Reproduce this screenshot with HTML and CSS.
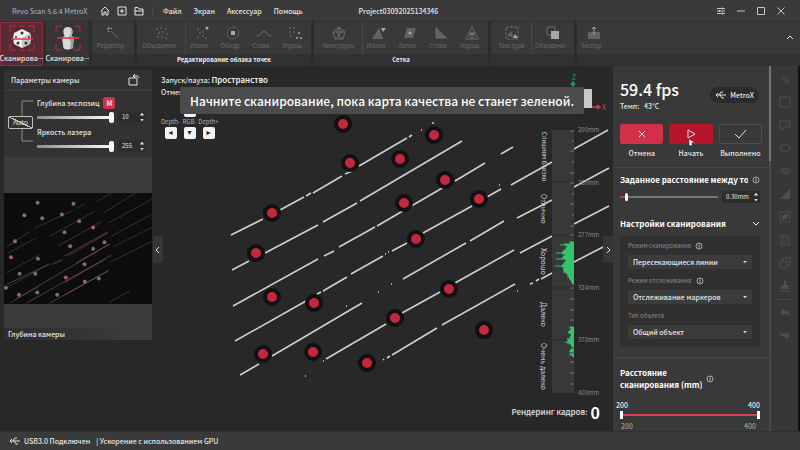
FILE: index.html
```html
<!DOCTYPE html>
<html lang="ru">
<head>
    <meta charset="UTF-8">
    <meta name="viewport" content="width=device-width, initial-scale=1.0">
    <title>Revo Scan 5.6.4 MetroX</title>
    <link rel="stylesheet" href="styles.css">
</head>
<body>
    <header class="titlebar">
        <span class="app-name">Revo Scan 5.6.4 MetroX</span>
        <div class="quick">
            <button aria-label="Домой"><svg viewBox="0 0 10 10"><path d="M1 5l4-4 4 4M2 4.500V9h2V6h2v3h2V4.500"/></svg></button>
            <button aria-label="Новый"><svg viewBox="0 0 10 10"><path d="M1 1h8v8H1zM3 5h4M5 3v4"/></svg></button>
            <button aria-label="Открыть"><svg viewBox="0 0 10 10"><path d="M1 9V1.500h3l1 1.500h4v6zM1 5h8"/></svg></button>
        </div>
        <nav class="menu">
            <a href="#">Файл</a>
            <a href="#">Экран</a>
            <a href="#">Аксессуар</a>
            <a href="#">Помощь</a>
        </nav>
        <span class="project">Project03092025134346</span>
        <div class="window-buttons">
            <button aria-label="Настройки"><svg viewBox="0 0 10 10"><path d="M1 2.500h8M1 5h8M1 7.500h8M6.500 1.500v2M3.500 4v2M6.500 6.500v2"/></svg></button>
            <button aria-label="Свернуть"><svg viewBox="0 0 10 10"><path d="M1 5h8"/></svg></button>
            <button aria-label="Развернуть"><svg viewBox="0 0 10 10"><path d="M1.500 1.500h7v7h-7z"/></svg></button>
            <button aria-label="Закрыть"><svg viewBox="0 0 10 10"><path d="M1.500 1.500l7 7M8.500 1.500l-7 7"/></svg></button>
        </div>
    </header>

    <div class="ribbon">
        <button class="scan active">
            <svg viewBox="0 0 28 28">
                <path class="frame" d="M2 8V2h6M20 2h6v6M26 20v6h-6M8 26H2v-6M11 2h6M11 26h6"/>
                <path fill="#f2f2f2" d="M14 5l8 4 1 5-1 6-8 4-8-4-1-6 1-5z"/>
                <path fill="#c4c4c4" d="M14 14l8-5 1 5-1 6-8 4z"/>
                <g fill="#333"><circle cx="14" cy="9" r="1.500"/><circle cx="10" cy="19" r="1.500"/><circle cx="18" cy="19" r="1.500"/><circle cx="8" cy="13" r="1"/><circle cx="21" cy="13" r="1"/></g>
                <path stroke="#e8304c" stroke-width="1.500" d="M3 15h22"/>
            </svg>
            <span>Сканирова<i>···</i></span>
        </button>
        <button class="scan">
            <svg viewBox="0 0 28 28">
                <path class="frame" d="M2 8V2h6M20 2h6v6M26 20v6h-6M8 26H2v-6"/>
                <path fill="#d9d9d9" d="M14 3c4 0 5 3 4.500 6l-1 3c4 1 2 4 2 6-1 3 0 5-1 6-3 2-7 2-9 0-1-2 0-4-1-6 0-2-1-5 2-6l-1-3C9 6 10 3 14 3z"/>
                <path fill="#9c9c9c" d="M15 4c3 2 2 5 1 8l-2 2 3 4-1 7c3 0 4-1 3-5l1-5-3-3 1-4c0-2-1-4-3-4z"/>
                <path stroke="#e8304c" stroke-width="1.500" d="M3 14h22"/>
            </svg>
            <span>Сканирова<i>···</i></span>
        </button>
        <section class="group">
            <div class="tools">
                <button><svg viewBox="0 0 14 14"><path d="M5 5l7 7"/><path class="lit" d="M3 1v2M1 3h2M6 2L5 3M2 6l1-1"/></svg><span>Редактор<i>···</i></span></button>
            </div>
        </section>
        <section class="group">
            <div class="tools">
                <button class="wide"><svg viewBox="0 0 14 14"><g class="dots"><circle cx="2" cy="3" r="1"/><circle cx="6" cy="2" r="1"/><circle cx="11" cy="3" r="1"/><circle cx="4" cy="7" r="1"/><circle cx="8" cy="6" r="1"/><circle cx="12" cy="8" r="1"/><circle cx="3" cy="11" r="1"/><circle cx="7" cy="11" r="1"/><circle cx="11" cy="12" r="1"/></g></svg><span>Объединен<i>···</i></span></button>
                <button><svg viewBox="0 0 14 14"><g class="dots"><circle cx="3" cy="3" r="1"/><circle cx="5" cy="7" r="1"/><circle cx="8" cy="6" r="1"/><circle cx="3" cy="11" r="1"/><circle cx="8" cy="10" r="1"/><circle cx="11" cy="12" r="1"/></g><circle class="fill" cx="12" cy="2" r="1.500"/></svg><span>Изоле<i>···</i></span></button>
                <button><svg viewBox="0 0 14 14"><path stroke-dasharray="2 1" d="M7 1a6 6 0 1 1-.1 0"/><path class="fill" d="M5 5h4v4H5z"/></svg><span>Обнар<i>···</i></span></button>
                <button><svg viewBox="0 0 14 14"><path d="M0 10c4 0 5-5 7-5s3 5 7 5"/></svg><span>Сглаж<i>···</i></span></button>
                <button><svg viewBox="0 0 14 14"><g class="dots"><circle cx="2" cy="2" r="1"/><circle cx="6" cy="2" r="1"/><circle cx="2" cy="6" r="1"/><circle cx="6" cy="6" r="1"/><circle cx="3" cy="10" r="1"/></g><g class="fill"><circle cx="11" cy="7" r="1"/><circle cx="9" cy="12" r="1"/><circle cx="13" cy="12" r="1"/></g></svg><span>Упрощ<i>···</i></span></button>
            </div>
            <h2>Редактирование облака точек</h2>
        </section>
        <section class="group">
            <div class="tools">
                <button class="wide"><svg viewBox="0 0 14 14"><path d="M7 1l6 5-2 7H3L1 6zM7 1L5 6l2 4 2-4zM1 6h12M3 13l4-3 4 3"/></svg><span>Конструкц</span></button>
                <button><svg viewBox="0 0 14 14"><path class="dim" d="M7 2l4 11H0z"/><path class="fill" d="M9 2h5l-3 4z"/></svg><span>Изоли<i>···</i></span></button>
                <button><svg viewBox="0 0 14 14"><path class="dim" d="M4 2h9l-3 10H1z"/><circle class="fill" cx="7" cy="7" r="1.500"/></svg><span>Запол<i>···</i></span></button>
                <button><svg viewBox="0 0 14 14"><path class="dim" d="M2 1l11 11H2z"/><path d="M2 1v11h11"/></svg><span>Сглаж<i>···</i></span></button>
                <button><svg viewBox="0 0 14 14"><path d="M7 1l6 12H1zM4 7h6l-3 6z"/><circle class="fill" cx="7" cy="8" r="1"/></svg><span>Упрощ<i>···</i></span></button>
            </div>
            <h2>Сетка</h2>
        </section>
        <section class="group">
            <div class="tools">
                <button class="wide"><svg viewBox="0 0 14 14"><path stroke-dasharray="3 1" d="M1 1h12v12H1z"/><path class="dim" d="M2 10l4-5 3 6z"/><path class="fill" d="M8 12l2-4 3 4z"/></svg><span>Текстура</span></button>
                <button class="merge"><svg viewBox="0 0 14 14"><path d="M1 1h8v8H1z"/><path class="fill" d="M5 5h8v8H5z"/></svg><span>Объедини<i>···</i></span></button>
            </div>
        </section>
        <section class="group rest">
            <div class="tools">
                <button><svg viewBox="0 0 14 14"><path class="dim" d="M1 6h12v7H1z"/><path class="lit" d="M7 9V1M5 3l2-2 2 2"/></svg><span>Экспор<i>···</i></span></button>
                <button class="fold" aria-label="Скрыть ленту"><svg viewBox="0 0 8 8"><path d="M1 5l3-3 3 3"/></svg></button>
            </div>
        </section>
    </div>

    <main class="workspace">
        <aside class="camera">
            <div class="camera-head">
                <h3>Параметры камеры</h3>
                <svg viewBox="0 0 12 12"><path d="M1 4h8v7H1zM6 2h3c1 0 2 1 2 2M7 0L5 2l2 2"/></svg>
            </div>
            <div class="camera-params">
                <div class="auto">
                    <svg viewBox="0 0 12 16"><path d="M12 1H1v15"/></svg>
                    <button>Auto</button>
                    <svg viewBox="0 0 12 16"><path d="M1 0v12h11"/></svg>
                </div>
                <div class="params">
                    <div class="param-name"><label for="exposure">Глубина экспозиц</label><button class="manual">M</button></div>
                    <div class="slider-row">
                        <input type="range" id="exposure" min="0" max="10" value="10">
                        <div class="stepper"><input type="text" aria-label="Экспозиция" value="10"><button class="up" aria-label="Больше"></button><button class="down" aria-label="Меньше"></button></div>
                    </div>
                    <div class="param-name"><label for="laser">Яркость лазера</label></div>
                    <div class="slider-row">
                        <input type="range" id="laser" min="0" max="255" value="255">
                        <div class="stepper"><input type="text" aria-label="Лазер" value="255"><button class="up" aria-label="Больше"></button><button class="down" aria-label="Меньше"></button></div>
                    </div>
                </div>
            </div>
            <svg class="depth-image" viewBox="12 25 445 335">
                <g class="far">
                    <path d="M20 187L88 142M105 131l115-54M230 71l25-15M290 52l45-27M25 205l85-45M150 155l135-75M312 84l95-59M20 265l100-55M175 184l130-73M325 116l132-73M20 310l125-70M205 215l120-70M335 155l122-67M30 355l85-48M340 187l117-58M335 231l122-61M330 353l60-33"/>
                </g>
                <g class="mid">
                    <path d="M45 346L330 178M80 356L335 212M150 356L327 258M20 300l130-62"/>
                </g>
                <g class="hot">
                    <path d="M155 240l32-14M193 215l130-72M230 235l100-57M195 293l120-68M195 331l130-72"/>
                </g>
                <g class="spots">
                    <circle cx="113" cy="54" r="6"/><circle cx="221" cy="57" r="6"/><circle cx="73" cy="92" r="6"/><circle cx="127" cy="101" r="6"/><circle cx="186" cy="90" r="6"/><circle cx="194" cy="143" r="6"/><circle cx="314" cy="173" r="6"/><circle cx="211" cy="185" r="6"/><circle cx="280" cy="193" r="6"/><circle cx="114" cy="223" r="6"/><circle cx="254" cy="239" r="6"/><circle cx="59" cy="268" r="6"/><circle cx="106" cy="268" r="6"/><circle cx="297" cy="282" r="6"/><circle cx="112" cy="324" r="6"/><circle cx="172" cy="331" r="6"/>
                </g>
                <g class="spots pink">
                    <circle cx="238" cy="110" r="6"/><circle cx="280" cy="129" r="6"/><circle cx="45" cy="170" r="6"/><circle cx="33" cy="218" r="6"/><circle cx="198" cy="279" r="6"/><circle cx="255" cy="292" r="6"/><circle cx="18" cy="310" r="6"/><circle cx="57" cy="331" r="6"/>
                </g>
            </svg>
            <p class="depth-label"><span>Глубина камеры</span></p>
        </aside>

        <section class="scene">
            <!-- laser lines and markers of the scan -->
            <svg class="points" viewBox="153 66 460 365" preserveAspectRatio="xMinYMin meet">
                <path class="laser" d="M231 235L263 219M280 210l24-13M306 196l5-3M313 193l29-17M345 174l7-3M359 166l48-28M409 137l3-2M421 130h1M432 123h2
                    M232 270l17-9M265 253l53-28M323 222l34-19M360 201l102-60
                    M233 306l85-47M324 256l10-5M339 247l36-20M377 226L444 187M455 181l30-18M501 154l12-7
                    M235 341l71-40M317 294l4-2M323 291l24-14M351 274l32-18M385 254h1M388 252h1M392 251l15-8M423 233l49-27M487 197l14-8M511 185l41-23M574 149l34-19
                    M240 375l19-11M272 356l90-53M346 306h1M378 292h1M391 284h1M403 279l63-36M470 241l34-20M517 218l35-18M574 187l35-19M499 185h1
                    M323 361h1M326 359l60-35M402 313l38-21M455 283l59-33M520 253l36-19M574 224l35-18
                    M383 360l1-1M387 358l3-2M392 355l45-27M442 325l73-41M517 291h1M530 284l3-1M536 281l3-2M541 279l11-6M574 262l29-15M305 376h1"/>
                <g class="markers">
                    <circle cx="343" cy="124" r="7"/><circle cx="350" cy="163" r="7"/><circle cx="400" cy="159" r="7"/><circle cx="434" cy="135" r="7"/><circle cx="272" cy="213" r="7"/><circle cx="445" cy="180" r="7"/><circle cx="404" cy="203" r="7"/><circle cx="479" cy="199" r="7"/><circle cx="416" cy="239" r="7"/><circle cx="256" cy="253" r="7"/><circle cx="272" cy="297" r="7"/><circle cx="314" cy="303" r="7"/><circle cx="449" cy="289" r="7"/><circle cx="395" cy="318" r="7"/><circle cx="484" cy="330" r="7"/><circle cx="263" cy="354" r="7"/><circle cx="313" cy="352" r="7"/><circle cx="367" cy="363" r="7"/>
                </g>
            </svg>
            <div class="hud">
                <div class="hud-top">
                    <div class="hints">
                        <p>Запуск/пауза: <b>Пространство</b></p>
                        <p>Отмена:</p>
                        <div class="keys">
                            <kbd class="key-up">▴</kbd>
                            <span>Depth-</span><span>RGB-</span><span>Depth+</span>
                            <kbd>◂</kbd><kbd>▾</kbd><kbd>▸</kbd>
                        </div>
                    </div>
                    <svg class="axes" viewBox="0 0 46 44">
                        <text x="10" y="6" fill="#1f9d5c">Z</text>
                        <path stroke="#1f9d5c" stroke-width="1.500" d="M11 9v10M9 11l2-3 2 3"/>
                        <path fill="#c9c9c9" stroke="none" d="M10 15h20v19H10z"/>
                        <path stroke="#d8384f" stroke-width="1.500" d="M30 33h7M35 31l3 2-3 2"/>
                        <text x="40" y="36" fill="#d8384f">X</text>
                    </svg>
                </div>
                <div class="gauge">
                    <div class="zones">
                        <span>Слишком близко</span><span>Отлично</span><span>Хорошо</span><span>Далеко</span><span>Очень далеко</span>
                    </div>
                    <svg class="histogram" viewBox="0 0 22 263" preserveAspectRatio="none">
                        <path class="bar" d="M0 0h22v263H0z"/>
                        <path class="cut" d="M0 52h22M0 105h22M0 158h22M0 210h22"/>
                        <path class="ticks" d="M18 1h4M20 11h2M18 21h4M20 32h2M18 43h4M18 53h4M20 64h2M18 74h4M20 85h2M18 96h4M18 105h4M18 158h4M18 169h4M18 180h4M18 190h4M18 211h4M18 232h4M18 243h4M18 254h4"/>
                        <path class="counts" d="M22 112h-5M22 113h-4M22 114h-10M22 115h-14M22 116h-8M22 117h-7M22 118h-9M22 119h-8M22 120h-10M22 121h-11M22 122h-12M22 123h-18M22 124h-12M22 125h-9M22 126h-11M22 127h-11M22 128h-12M22 129h-18M22 130h-9M22 131h-8M22 132h-10M22 133h-10M22 134h-11M22 135h-12M22 136h-19M22 137h-12M22 138h-10M22 139h-11M22 140h-11M22 141h-10M22 142h-11M22 143h-9M22 144h-7M22 145h-7M22 146h-6M22 147h-7M22 148h-5M22 149h-5M22 150h-4M22 151h-3M22 152h-3M22 153h-2M22 154h-2
                            M22 197h-4M22 198h-5M22 199h-3M22 200h-4M22 201h-5M22 202h-6M22 203h-6M22 204h-4M22 205h-3M22 206h-3M22 207h-5M22 208h-4M22 209h-7M22 210h-7M22 211h-6M22 212h-9M22 213h-7M22 214h-5M22 215h-3M22 216h-3M22 217h-2M22 219h-3M22 220h-4M22 221h-5M22 222h-4M22 224h-5M22 225h-4M22 226h-2M22 227h-1"/>
                    </svg>
                    <div class="scale">
                        <span>200mm</span><span>250mm</span><span>277mm</span><span>324mm</span><span>370mm</span><span>400mm</span>
                    </div>
                </div>
                <p class="frames">Рендеринг кадров: <b>0</b></p>
            </div>
            <button class="edge-tab left" aria-label="Скрыть камеру"><svg viewBox="0 0 8 8"><path d="M5 1L2 4l3 3"/></svg></button>
            <button class="edge-tab right" aria-label="Скрыть настройки"><svg viewBox="0 0 8 8"><path d="M3 1l3 3-3 3"/></svg></button>
            <div class="toast" role="status">Начните сканирование, пока карта качества не станет зеленой.</div>
        </section>

        <aside class="settings">
            <div class="status">
                <div>
                    <h1>59.4 fps</h1>
                    <p>Темп: &nbsp;&nbsp;43°C</p>
                </div>
                <span class="device"><svg viewBox="0 0 12 8"><path d="M1 4h10M4 4l2-3h2M5 4l2 3h2M1 4l2-2M1 4l2 2"/></svg>MetroX</span>
            </div>
            <div class="actions">
                <button><span class="face red"><svg viewBox="0 0 16 16"><path d="M5 5l6 6M11 5l-6 6"/></svg></span>Отмена</button>
                <button><span class="face crimson"><svg viewBox="0 0 16 16"><path d="M5 4l7 4-7 4z"/><path class="cursor" d="M6 13l5 3-2 1v3l-3-1z"/></svg></span>Начать</button>
                <button><span class="face"><svg viewBox="0 0 16 16"><path d="M3 8l4 4 7-8"/></svg></span>Выполнено</button>
            </div>
            <div class="section spacing">
                <div class="heading"><label for="gap">Заданное расстояние между точками</label><svg class="info" viewBox="0 0 8 8"><circle cx="4" cy="4" r="3"/><path d="M4 3v3M4 2h1"/></svg></div>
                <div class="slider-row">
                    <input class="red-range" type="range" id="gap" min="0" max="100" value="5">
                    <div class="stepper"><input type="text" aria-label="Расстояние" value="0.30mm"><button class="up" aria-label="Больше"></button><button class="down" aria-label="Меньше"></button></div>
                </div>
            </div>
            <div class="section">
                <div class="heading"><h2>Настройки сканирования</h2><svg class="info chevron" viewBox="0 0 8 8"><path d="M1 2l3 3 3-3"/></svg></div>
                <div class="options">
                    <label for="mode">Режим сканирования<svg class="info" viewBox="0 0 8 8"><circle cx="4" cy="4" r="3"/><path d="M4 3v3M4 2h1"/></svg></label>
                    <div class="select"><select id="mode"><option>Пересекающиеся линии</option></select></div>
                    <label for="tracking">Режим отслеживания<svg class="info" viewBox="0 0 8 8"><circle cx="4" cy="4" r="3"/><path d="M4 3v3M4 2h1"/></svg></label>
                    <div class="select"><select id="tracking"><option>Отслеживание маркеров</option></select></div>
                    <label for="object">Тип объекта</label>
                    <div class="select"><select id="object"><option>Общий объект</option></select></div>
                </div>
            </div>
            <div class="section distance">
                <div class="heading"><h2>Расстояние<br>сканирования (mm)</h2><svg class="info" viewBox="0 0 8 8"><circle cx="4" cy="4" r="3"/><path d="M4 3v3M4 2h1"/></svg></div>
                <div class="ends"><span>200</span><span>400</span></div>
                <div class="dual">
                    <input type="range" aria-label="Минимум" min="200" max="400" value="200">
                    <input type="range" aria-label="Максимум" min="200" max="400" value="400">
                </div>
                <div class="ends limits"><span>200</span><span>400</span></div>
            </div>
        </aside>

        <nav class="toolstrip">
            <button aria-label="Снять выделение"><svg viewBox="0 0 12 12"><path d="M2 2l8 8M3 6l3-3 4 4-3 3z"/></svg></button>
            <button aria-label="Прямоугольник"><svg viewBox="0 0 12 12"><path d="M1 1h10v10H1z"/></svg></button>
            <button aria-label="Многоугольник"><svg viewBox="0 0 12 12"><path d="M1 2h10v6H6l-4 3V8H1z"/></svg></button>
            <button aria-label="Лассо"><svg viewBox="0 0 12 12"><path d="M3 9C0 7 1 2 6 2s6 5 3 7zM3 9l-1 2"/></svg></button>
            <button aria-label="Видимость"><svg viewBox="0 0 12 12"><path d="M1 6c2-4 8-4 10 0-2 4-8 4-10 0z"/><circle cx="6" cy="6" r="2"/></svg></button>
            <button aria-label="Плоскость"><svg viewBox="0 0 12 12"><path class="solid" d="M11 1v10H1z"/></svg></button>
            <button aria-label="Инверсия"><svg viewBox="0 0 12 12"><path d="M1 1h10v10H1z"/><path class="solid" d="M3 9V5l4-2h2v3L5 9z"/></svg></button>
            <button aria-label="Удалить"><svg viewBox="0 0 12 12"><path d="M1 3h10M4 3V1h4v2M2 3v8h8V3M5 5v4M7 5v4"/></svg></button>
            <button aria-label="Копировать"><svg viewBox="0 0 12 12"><path d="M1 4h7v7H1zM4 4V1h7v7H8"/></svg></button>
            <button aria-label="Очистить"><svg viewBox="0 0 12 12"><path class="solid" d="M5 1h2v4h2l1 4H2l1-4h2z"/><path d="M1 11h10"/></svg></button>
            <hr>
            <button aria-label="Отменить"><svg viewBox="0 0 12 12"><path class="solid" d="M5 2v2c4 0 6 2 6 6-2-3-3-3-6-3v2L1 5z"/></svg></button>
            <button aria-label="Повторить"><svg viewBox="0 0 12 12"><path class="solid" d="M7 2v2C4 4 2 3 1 2c0 3 2 5 6 5v3l4-4z"/></svg></button>
        </nav>
    </main>

    <footer class="statusbar">
        <svg viewBox="0 0 12 8"><path d="M1 4h10M4 4l2-3h2M5 4l2 3h2M1 4l2-2M1 4l2 2"/></svg>
        <span>USB3.0 Подключен</span>
        <span>| Ускорение с использованием GPU</span>
    </footer>
</body>
</html>
```
FILE: styles.css
```css
* {
    box-sizing: border-box;
}

body {
    font-family: "Noto Sans CJK SC", "Noto Sans", sans-serif;
    font-size: 7px;
    line-height: 12px;
    color: #e4e4e4;
    background: #282828;
    margin: 0;
    height: 100vh;
    display: flex;
    flex-direction: column;
    overflow: hidden;
}

h1, h2, h3, p {
    margin: 0;
    font-size: 7px;
}

button, input, select {
    font: inherit;
    color: inherit;
    background: none;
    border: none;
    padding: 0;
    margin: 0;
}

a {
    color: inherit;
    text-decoration: none;
}

svg {
    display: block;
    fill: none;
    stroke: currentColor;
    stroke-width: 1;
    flex: none;
}

/* Title bar */
.titlebar {
    display: flex;
    align-items: center;
    height: 22px;
    flex: none;
    padding: 0 14px 0 12px;
    background: #3a3a3a;
    border-bottom: 1px solid #303030;
}

.app-name {
    color: #b4b4b4;
    width: 88px;
}

.quick {
    display: flex;
    gap: 7px;
    padding-right: 8px;
    border-right: 1px solid #484848;
}

.quick svg {
    width: 10px;
    height: 10px;
}

.menu {
    display: flex;
    gap: 12px;
    padding-left: 10px;
    font-weight: 500;
}

.project {
    font-weight: 500;
    flex: 1;
    padding-left: 56px;
}

.window-buttons {
    display: flex;
    gap: 10px;
    color: #c4c4c4;
}

.window-buttons svg {
    width: 10px;
    height: 10px;
}

/* Ribbon */
.ribbon {
    display: flex;
    gap: 3px;
    height: 44px;
    flex: none;
    background: #2c2c2c;
}

.ribbon i {
    font-family: "Noto Sans", sans-serif;
    font-style: normal;
}

.scan {
    width: 43px;
    background: #363636;
    display: flex;
    flex-direction: column;
    align-items: center;
    padding-top: 2px;
    white-space: nowrap;
    font-weight: 500;
}

.scan svg {
    width: 28px;
    height: 28px;
    stroke: none;
}

.scan .frame {
    stroke: #c22a40;
    stroke-width: 1;
}

.scan.active {
    background: #582b32;
    border: 1px solid #8c2c3a;
    padding-top: 1px;
}

.group {
    display: flex;
    flex-direction: column;
    background: linear-gradient(#393939 32px, #313131 32px);
}

.group h2 {
    text-align: center;
    font-size: 6px;
    font-weight: 700;
    color: #f0f0f0;
}

.tools {
    display: flex;
    height: 32px;
    padding: 0 1px;
    font-size: 6px;
    color: #6c6c6c;
}

.tools button {
    width: 31px;
    display: flex;
    flex-direction: column;
    align-items: center;
    padding-top: 4px;
    white-space: nowrap;
}

.tools svg {
    width: 14px;
    height: 14px;
}

.tools button:first-child:last-child {
    width: 40px;
}

.tools .wide {
    width: 48px;
    border-right: 1px solid #484848;
}

.tools .wide:nth-last-child(2) {
    width: 40px;
}

.tools .merge {
    width: 41px;
}

.lit {
    stroke: #a8a8a8;
}

.tools .fill {
    fill: #a8a8a8;
    stroke: none;
}

.tools .dim, .dots {
    fill: #626262;
    stroke: none;
}

.rest {
    flex: 1;
}

.rest .tools {
    justify-content: space-between;
    padding-right: 6px;
}

.rest .tools .fold {
    width: 8px;
    padding-top: 12px;
    color: #f0f0f0;
}

.fold svg {
    width: 8px;
    height: 8px;
}

/* Workspace */
.workspace {
    display: flex;
    flex: 1;
    min-height: 0;
}

.camera {
    width: 148px;
    margin: 4px 0 0 4px;
    align-self: flex-start;
    flex: none;
    background: #3b3b3b;
}

.camera-head {
    display: flex;
    justify-content: space-between;
    align-items: center;
    height: 21px;
    padding: 0 12px 0 7px;
    background: #323232;
    border-bottom: 1px solid #404040;
}

.camera-head h3 {
    font-weight: 500;
}

.camera-head svg {
    width: 12px;
    height: 12px;
}

.camera-params {
    display: flex;
    gap: 4px;
    height: 66px;
    padding: 5px 6px 0 4px;
    margin-bottom: 36px;
    background: #323232;
}

.auto {
    display: flex;
    flex-direction: column;
    align-items: flex-end;
    padding-top: 4px;
    color: #8a8a8a;
}

.auto svg {
    width: 12px;
    height: 16px;
}

.auto button {
    width: 25px;
    height: 13px;
    line-height: 11px;
    color: #d8d8d8;
    border: 1px solid #c0c0c0;
    border-radius: 2px;
    background: linear-gradient(to top right, transparent 47%, #c0c0c0 47%, #c0c0c0 53%, transparent 53%);
}

.params {
    flex: 1;
    min-width: 0;
}

.param-name {
    display: flex;
    align-items: center;
    gap: 4px;
    height: 13px;
    font-weight: 500;
    white-space: nowrap;
}

.manual {
    width: 12px;
    height: 12px;
    border-radius: 2px;
    background: #d4304a;
    font-weight: 700;
}

.slider-row {
    display: flex;
    align-items: center;
    gap: 4px;
    height: 16px;
}

input[type="range"] {
    appearance: none;
    flex: 1;
    min-width: 0;
    height: 12px;
    background: linear-gradient(90deg, #8c8c8c, #fff) center / 100% 3px no-repeat;
}

input[type="range"]::-webkit-slider-thumb {
    appearance: none;
    width: 5px;
    height: 11px;
    border-radius: 2px;
    background: #fff;
}

.stepper {
    display: grid;
    grid-template-columns: 1fr 6px;
    width: 28px;
    height: 12px;
    padding-right: 1px;
    align-items: center;
    background: #2d2d2d;
}

.stepper input {
    grid-row: 1 / 3;
    width: 100%;
    min-width: 0;
    padding-left: 4px;
    font-size: 6px;
}

.stepper button {
    justify-self: center;
    width: 4px;
    height: 3px;
    background: #e4e4e4;
}

.stepper .up {
    clip-path: polygon(0 100%, 50% 0, 100% 100%);
}

.stepper .down {
    clip-path: polygon(0 0, 50% 100%, 100% 0);
}

.depth-image {
    width: 100%;
    background: #0d0d0d;
}

.far {
    stroke: #454545;
    stroke-width: 2;
}

.mid {
    stroke: #6a5a5a;
    stroke-width: 2;
}

.hot {
    stroke: #9a4c58;
    stroke-width: 2;
}

.spots {
    fill: #737373;
    stroke: none;
}

.pink {
    fill: #a0616a;
}

.depth-label {
    padding-top: 24px;
    font-weight: 500;
}

.depth-label span {
    display: block;
    padding-left: 4px;
    background: linear-gradient(90deg, #2e2e2e, #343434 50%, #3b3b3b 80%);
}

/* 3D scene */
.scene {
    flex: 1;
    min-width: 0;
    position: relative;
    margin-left: 1px;
}

.points {
    position: absolute;
    inset: 0;
    width: 100%;
    height: 100%;
}

.laser {
    stroke: #cfcfcf;
    stroke-width: 1.6;
}

.markers {
    fill: #c5273e;
    stroke: #111;
    stroke-width: 4;
}

.hud {
    position: relative;
    height: 100%;
    display: flex;
    flex-direction: column;
    padding: 8px 13px 10px 8px;
}

.hud-top {
    display: flex;
    justify-content: space-between;
    height: 50px;
}

.hints {
    font-weight: 500;
}

.hints b {
    font-size: 8px;
    font-weight: 500;
    color: #fff;
}

.keys {
    display: grid;
    grid-template-columns: repeat(3, 19px);
    justify-items: center;
    font-size: 6px;
    line-height: 10px;
    font-weight: 400;
    padding-top: 7px;
    color: #b0b0b0;
    white-space: nowrap;
}

.keys kbd {
    font-family: "DejaVu Sans", sans-serif;
    font-size: 8px;
    line-height: 12px;
    width: 12px;
    height: 12px;
    border-radius: 2px;
    background: #f2f2f2;
    color: #222;
    text-align: center;
}

.keys .key-up {
    grid-column: 1 / 4;
}

.axes {
    width: 46px;
    height: 44px;
    margin-right: -8px;
    font-size: 7px;
}

.axes text {
    stroke: none;
}

.gauge {
    display: flex;
    flex: 1;
    align-self: flex-end;
    margin: 6px 0 10px;
    min-height: 0;
    color: #8c8c8c;
}

.zones {
    display: grid;
    grid-template-rows: repeat(5, 1fr);
    align-items: center;
    color: #d0d0d0;
    width: 12px;
    margin-right: 2px;
}

.zones span {
    writing-mode: vertical-rl;
    text-align: center;
    white-space: nowrap;
}

.zones span:first-child {
    font-size: 6px;
}

.histogram {
    width: 22px;
    height: 100%;
}

.bar {
    fill: #383838;
    stroke: none;
}

.cut {
    stroke: #2a2a2a;
}

.ticks {
    stroke: #777;
}

.counts {
    stroke: #2fc56b;
    stroke-width: 1.2;
}

.scale {
    display: flex;
    flex-direction: column;
    justify-content: space-between;
    margin: -6px 0 -6px 4px;
    width: 22px;
    font-size: 6px;
}

.frames {
    display: flex;
    align-items: center;
    justify-content: flex-end;
    gap: 3px;
    height: 18px;
    font-size: 8px;
    font-weight: 500;
}

.frames b {
    font-size: 16px;
    color: #fff;
}

.edge-tab {
    position: absolute;
    top: 170px;
    width: 10px;
    height: 27px;
    background: #363636;
    border-radius: 2px;
    display: flex;
    align-items: center;
    justify-content: center;
}

.edge-tab svg {
    width: 8px;
    height: 8px;
}

.left {
    left: 0;
}

.right {
    right: 0;
}

.toast {
    position: absolute;
    top: 21px;
    left: 27px;
    right: 29px;
    height: 27px;
    border-radius: 2px;
    background: #4b4b4b;
    color: #fff;
    font-size: 12px;
    line-height: 27px;
    font-weight: 500;
    text-align: center;
    white-space: nowrap;
}

/* Settings */
.settings {
    width: 158px;
    flex: none;
    padding-right: 2px;
    background: linear-gradient(#777 95px, #4a4a4a 95px) right / 2px 100% no-repeat #393939;
    overflow: hidden;
}

.status {
    display: flex;
    justify-content: space-between;
    align-items: center;
    padding: 12px 10px 10px 7px;
}

.status h1 {
    font-size: 16px;
    line-height: 22px;
    color: #fff;
    font-weight: 500;
}

.status p {
    font-weight: 500;
}

.device {
    display: flex;
    align-items: center;
    gap: 3px;
    height: 16px;
    padding: 0 5px;
    border-radius: 8px;
    background: #2b2b2b;
    font-weight: 500;
}

.device svg, .statusbar svg {
    width: 12px;
    height: 8px;
}

.actions {
    display: grid;
    grid-template-columns: repeat(3, 1fr);
    gap: 6px;
    padding: 2px 7px 8px;
    border-bottom: 1px solid #444;
}

.actions button {
    font-weight: 500;
    white-space: nowrap;
}

.face {
    display: flex;
    align-items: center;
    justify-content: center;
    height: 20px;
    margin-bottom: 3px;
    border-radius: 2px;
    border: 1px solid #4d4d4d;
}

.face svg {
    width: 16px;
    height: 16px;
    overflow: visible;
}

.red {
    background: #d22f48;
    border-color: #d22f48;
}

.crimson {
    background: #b8142c;
    border-color: #b8142c;
}

.cursor {
    fill: #fff;
    stroke: #333;
    stroke-width: 0.5;
}

.section {
    padding: 6px 9px 0 7px;
}

.heading {
    display: flex;
    align-items: center;
    gap: 4px;
    font-weight: 700;
    color: #fff;
}

.heading label, .heading h2 {
    font-size: 8px;
    flex: 1;
    overflow: hidden;
    white-space: nowrap;
}

.info {
    width: 8px;
    height: 8px;
    color: #aaa;
}

.chevron {
    color: #fff;
}

.spacing .slider-row {
    margin: 3px 0 7px;
}

.spacing .stepper {
    width: 38px;
}

input.red-range {
    background: linear-gradient(90deg, #d4304a 6%, #777 6%) center / 100% 2px no-repeat;
}

input.red-range::-webkit-slider-thumb {
    width: 3px;
    height: 8px;
}

.options {
    display: flex;
    flex-direction: column;
    margin-top: 6px;
    padding: 4px 8px 7px;
    background: #303030;
}

.options label {
    display: flex;
    align-items: center;
    gap: 4px;
    margin-bottom: 3px;
    font-size: 6px;
    color: #8a8a8a;
}

.select {
    position: relative;
    margin-bottom: 6px;
}

.select:last-child {
    margin-bottom: 0;
}

.select::after {
    content: "";
    position: absolute;
    right: 5px;
    top: 6px;
    border: 2px solid transparent;
    border-top-color: #e4e4e4;
}

select {
    appearance: none;
    display: block;
    width: 100%;
    height: 14px;
    padding-left: 5px;
    background: #3b3b3b;
    font-weight: 500;
}

.distance {
    margin-top: 11px;
    padding-top: 9px;
    border-top: 1px solid #444;
}

.distance .heading h2 {
    flex: none;
}

.ends {
    display: flex;
    justify-content: space-between;
    margin: 8px 0 0 -4px;
    font-weight: 500;
}

.dual {
    display: grid;
    height: 8px;
}

.dual input {
    grid-area: 1 / 1;
    width: 100%;
    height: 8px;
    background: linear-gradient(#d8405a, #d8405a) center / 100% 2px no-repeat;
    pointer-events: none;
}

.dual input:last-child {
    background: none;
}

.dual input::-webkit-slider-thumb {
    width: 3px;
    height: 8px;
    border-radius: 0;
    pointer-events: auto;
}

.limits {
    margin: 1px 4px 0 1px;
    color: #999;
}

/* Right tool strip */
.toolstrip {
    width: 29px;
    flex: none;
    display: flex;
    flex-direction: column;
    align-items: center;
    gap: 11px;
    padding-top: 7px;
    background: #373737;
    border-right: 2px solid #111;
    color: #4f4f4f;
}

.toolstrip svg {
    width: 12px;
    height: 12px;
}

.toolstrip hr {
    width: 18px;
    margin: -4px 0;
    border: none;
    border-top: 1px solid #484848;
}

.solid {
    fill: currentColor;
    stroke: none;
}

/* Status bar */
.statusbar {
    display: flex;
    align-items: center;
    gap: 3px;
    height: 19px;
    flex: none;
    padding: 0 9px;
    background: #3a3a3a;
    border-top: 1px solid #303030;
    font-weight: 500;
}

.statusbar span {
    margin-right: 3px;
}
```
